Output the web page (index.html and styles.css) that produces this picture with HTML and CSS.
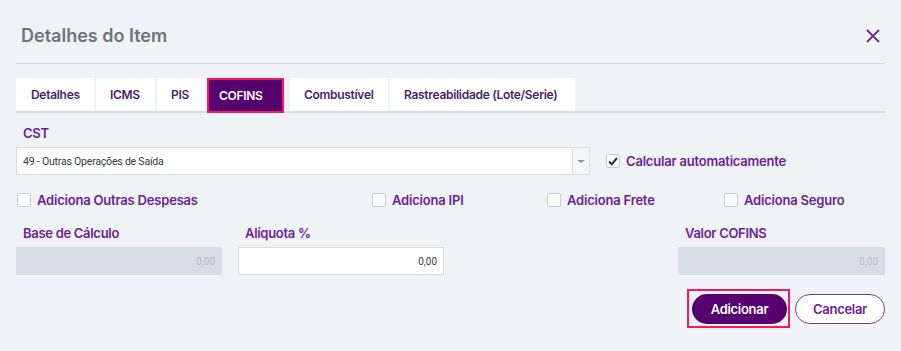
FILE: index.html
```html
<!DOCTYPE html>
<html lang="pt-BR">
<head>
    <meta charset="UTF-8">
    <meta name="viewport" content="width=device-width, initial-scale=1.0">
    <title>Detalhes do Item</title>
    <link rel="stylesheet" href="styles.css">
</head>
<body>
    <div class="modal">
        <header class="modal-header">
            <h2 class="modal-title">Detalhes do Item</h2>
            <button class="close-btn" aria-label="Fechar">
                <svg width="16" height="16" viewBox="0 0 16 16">
                    <path d="M2 2 L14 14 M14 2 L2 14" stroke="#6b2a8f" stroke-width="1.8" fill="none"/>
                </svg>
            </button>
        </header>

        <nav class="tabs">
            <a class="tab">Detalhes</a>
            <a class="tab">ICMS</a>
            <a class="tab">PIS</a>
            <a class="tab tab-active">COFINS</a>
            <a class="tab">Combustível</a>
            <a class="tab">Rastreabilidade (Lote/Serie)</a>
        </nav>

        <section class="form">
            <label class="field-label">CST</label>
            <div class="cst-row">
                <div class="select">
                    <span class="select-value">49 - Outras Operações de Saída</span>
                    <span class="select-arrow"></span>
                </div>
                <label class="check">
                    <span class="check-box checked">
                        <svg width="12" height="12" viewBox="0 0 12 12">
                            <path d="M2 6.5 L4.8 9.2 L10 3" stroke="#1d3a4c" stroke-width="2" fill="none"/>
                        </svg>
                    </span>
                    Calcular automaticamente
                </label>
            </div>

            <div class="checks-row">
                <label class="check"><span class="check-box"></span>Adiciona Outras Despesas</label>
                <label class="check"><span class="check-box"></span>Adiciona IPI</label>
                <label class="check"><span class="check-box"></span>Adiciona Frete</label>
                <label class="check"><span class="check-box"></span>Adiciona Seguro</label>
            </div>

            <div class="values-row">
                <div class="field">
                    <label class="field-label">Base de Cálculo</label>
                    <div class="input input-disabled">0,00</div>
                </div>
                <div class="field">
                    <label class="field-label">Alíquota %</label>
                    <div class="input">0,00</div>
                </div>
                <div></div>
                <div class="field">
                    <label class="field-label">Valor COFINS</label>
                    <div class="input input-disabled">0,00</div>
                </div>
            </div>
        </section>

        <footer class="modal-actions">
            <span class="focus-ring">
                <button class="btn btn-primary">Adicionar</button>
            </span>
            <button class="btn btn-outline">Cancelar</button>
        </footer>
    </div>
</body>
</html>
```

FILE: styles.css
```css
:root {
    --bg: #eff3f5;
    --line: #cfd9de;
    --purple: #55006e;
    --label-purple: #6d2293;
    --tab-text: #4a1f6a;
    --pink: #f5175f;
    --title-grey: #6b7480;
}

* {
    box-sizing: border-box;
    margin: 0;
    padding: 0;
}

body {
    font-family: Inter, 'Liberation Sans', Arial, sans-serif;
    background: var(--bg);
    color: var(--label-purple);
    width: 901px;
    height: 351px;
    overflow: hidden;
}

.modal {
    padding: 0 16px;
}

.modal-header {
    display: flex;
    justify-content: space-between;
    align-items: center;
    height: 64px;
    padding: 8px 4px 0 5px;
    border-bottom: 1px solid var(--line);
}

.modal-title {
    font-size: 18px;
    font-weight: 600;
    color: var(--title-grey);
}

.close-btn {
    background: none;
    border: none;
    display: flex;
}

.tabs {
    display: flex;
    gap: 2px;
    margin-top: 14px;
    border-bottom: 2px solid #d5dde2;
    height: 35px;
}

.tab {
    display: flex;
    align-items: center;
    background: white;
    height: 33px;
    font-size: 12px;
    font-weight: 600;
    color: var(--tab-text);
    letter-spacing: -0.3px;
    padding: 0 14px;
}

.tab:nth-child(1) { width: 78px; padding: 0 0 0 15px; }
.tab:nth-child(2) { width: 59px; padding: 0 0 0 14px; }
.tab:nth-child(3) { width: 48px; padding: 0 0 0 14px; }
.tab:nth-child(5) { width: 98px; padding: 0 0 0 14px; margin-left: 4px; }
.tab:nth-child(6) { width: 185px; padding: 0 0 0 14px; }

.tab-active {
    width: 77px;
    height: 35px;
    background: var(--purple);
    color: white;
    border: 2px solid var(--pink);
    padding: 0 0 0 10px;
}

.form {
    padding-top: 14px;
}

.field-label {
    display: block;
    font-size: 13px;
    line-height: 13px;
    font-weight: 600;
    color: var(--label-purple);
    letter-spacing: -0.3px;
    padding-left: 7px;
    height: 20px;
}

.cst-row {
    display: flex;
    align-items: center;
    gap: 16px;
}

.select {
    display: flex;
    width: 574px;
    height: 28px;
    background: white;
    border: 1px solid #d8dfe3;
}

.select-value {
    flex: 1;
    display: flex;
    align-items: center;
    padding-left: 6px;
    font-family: Roboto, sans-serif;
    font-size: 10.5px;
    color: #2e3c48;
    letter-spacing: -0.2px;
}

.select-arrow {
    width: 17px;
    border-left: 1px solid #d8dfe3;
    background: #f4f6f7;
    display: flex;
    align-items: center;
    justify-content: center;
}

.select-arrow::after {
    content: "";
    border-left: 4px solid transparent;
    border-right: 4px solid transparent;
    border-top: 3px solid #8a949c;
}

.check {
    display: flex;
    align-items: center;
    gap: 6px;
    font-size: 13px;
    font-weight: 600;
    letter-spacing: -0.2px;
    color: var(--label-purple);
}

.check-box {
    width: 14px;
    height: 14px;
    background: white;
    border: 1px solid #c8cfd4;
    border-radius: 2px;
    display: flex;
    align-items: center;
    justify-content: center;
}

.checks-row {
    display: grid;
    grid-template-columns: 355px 175px 177px 1fr;
    margin-top: 17px;
    padding-left: 1px;
}

.values-row {
    display: grid;
    grid-template-columns: 206px 206px 1fr 207px;
    column-gap: 16px;
    margin-top: 19px;
}

.input {
    height: 28px;
    background: white;
    border: 1px solid #d5dce0;
    display: flex;
    align-items: center;
    justify-content: flex-end;
    padding-right: 6px;
    font-family: Roboto, sans-serif;
    font-size: 10px;
    color: #2e3c48;
}

.input-disabled {
    background: #d8dfe3;
    border-color: #d8dfe3;
    color: #b3bcc2;
}

.modal-actions {
    display: flex;
    justify-content: flex-end;
    align-items: center;
    gap: 5px;
    margin-top: 14px;
}

.focus-ring {
    display: flex;
    border: 2px solid var(--pink);
    padding: 3px 1px 2px 3px;
}

.btn {
    height: 30px;
    border-radius: 15px;
    font-family: Inter, sans-serif;
    font-size: 13px;
    font-weight: 600;
    letter-spacing: -0.3px;
    cursor: pointer;
}

.btn-primary {
    width: 95px;
    background: var(--purple);
    color: white;
    border: none;
}

.btn-outline {
    width: 90px;
    background: white;
    color: var(--label-purple);
    border: 1px solid #7a3a9a;
}
```
